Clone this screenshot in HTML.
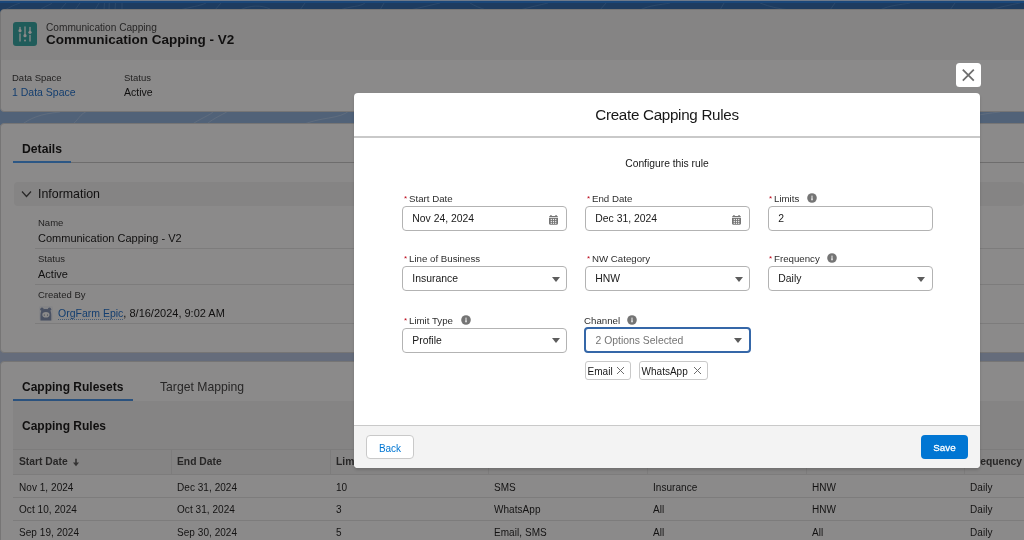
<!DOCTYPE html>
<html><head><meta charset="utf-8">
<style>
*{box-sizing:border-box;margin:0;padding:0}
html,body{width:1024px;height:540px;overflow:hidden}
body{font-family:"Liberation Sans",sans-serif;background:#b7c7e2;position:relative;color:#181818}
.a{position:absolute;white-space:nowrap}
#root{}
.card{position:absolute;background:#fff;border-radius:4px;border:1px solid #d8d8d8}
.lbl{font-size:9.5px;color:#3a3a3a}
.val{font-size:10.5px;color:#181818}
.link{color:#1f70cc}
.hr{position:absolute;height:1px;background:#e5e5e5}
.overlay{position:absolute;left:0;top:0;width:1024px;height:540px;background:rgba(8,7,7,0.47)}
.modal{position:absolute;left:354px;top:93px;width:626px;height:375px;background:#fff;border-radius:4px;overflow:hidden;box-shadow:0 2px 3px rgba(0,0,0,0.16)}
.mlbl{position:absolute;font-size:9.7px;color:#2e2e2e;white-space:nowrap;line-height:12px}
.req{position:absolute;left:-5px;top:0;color:#ba0517;font-size:8px}
.inp{position:absolute;height:24.5px;width:165px;border:1px solid #b3b3b3;border-radius:4px;font-size:10.4px;color:#181818;padding-left:9.3px;line-height:23px;white-space:nowrap}
.info{position:absolute;width:10px;height:10px;border-radius:50%;background:#747474}
.info:after{content:"";position:absolute;left:4.45px;top:2.4px;width:1.1px;height:4.8px;background:#fff;border-radius:0.5px}.info:before{content:"";position:absolute;left:4.05px;top:5.9px;width:1.9px;height:1.3px;background:#fff}
.caret{position:absolute;width:0;height:0;border-left:4px solid transparent;border-right:4px solid transparent;border-top:5px solid #5c5c5c}
.pill{position:absolute;height:19px;border:1px solid #c9c9c9;border-radius:3px;font-size:10px;line-height:19px;padding-left:1.6px;color:#181818;white-space:nowrap}
.th{position:absolute;font-size:10.3px;font-weight:bold;color:#444;white-space:nowrap}
.td{position:absolute;font-size:10px;letter-spacing:0.05px;color:#1e1e1e;white-space:nowrap}
</style></head><body><div id="root" style="position:absolute;left:0;top:0;width:1024px;height:540px;will-change:transform">
<!-- top blue band -->
<div class="a" style="left:0;top:0;width:1024px;height:1px;background:#c8e0ff"></div>
<div class="a" style="left:0;top:1px;width:1024px;height:2px;background:#2a80e0"></div>
<div class="a" style="left:0;top:3px;width:1024px;height:11px;background:#326db0"></div>
<svg class="a" style="left:0;top:3px" width="1024" height="7" viewBox="0 0 1024 7" fill="none" stroke="#6a9ad4" stroke-width="0.8" opacity="0.6">
<path d="M5 7C10 4 14 2 20 0M40 7C45 3 50 2 52 0M60 7L66 0M75 7L80 0M95 7L99 0M104 7L104.5 0M109 7L109.3 0M115 7L115.5 0M122 7L122 0M180 7C190 4 200 3 206 0M215 7L221 0M240 7C250 2 262 2 270 6M300 7L305 0M340 7C350 3 360 4 365 0M380 7L384 0M410 7C420 5 430 2 440 0M470 0C475 3 480 5 486 7M520 7C530 4 540 2 548 0M600 7L606 0M640 7C650 2 660 2 670 0M720 7L724 0M760 0C770 4 780 6 790 7M830 7L835 0M880 7C890 2 900 2 910 0M950 7L955 0M990 7C1000 4 1010 2 1020 0"/>
</svg>
<div class="a" style="left:0;top:14px;width:1024px;height:100px;background:linear-gradient(#4f86c8,#91b4de)"></div>
<div class="a" style="left:0;top:111px;width:1024px;height:14px;background:#91b4de"></div>
<svg class="a" style="left:0;top:110px" width="1024" height="16" viewBox="0 0 1024 16" fill="none" stroke="#c4d6ee" stroke-width="0.8" opacity="0.7">
<path d="M20 16C30 8 40 4 60 2M70 16C80 10 78 4 90 0M190 16C200 8 210 6 215 0M205 16C210 10 220 6 230 0M300 16C320 6 340 10 350 0M390 16C400 8 440 4 460 12C480 16 500 4 520 8M560 16C570 6 590 4 600 0M640 8C650 6 660 10 670 16M700 16C710 8 720 4 740 2M800 16C820 10 840 6 860 8C880 10 900 4 920 0M950 16C960 8 980 4 1000 2"/>
</svg>

<!-- header card -->
<div class="card" style="left:0;top:9px;width:1030px;height:103px;background:#fff"></div>
<div class="a" style="left:1px;top:10px;width:1030px;height:50px;background:#f3f3f3;border-radius:4px 0 0 0"></div>
<svg class="a" style="left:13px;top:22px" width="24" height="24" viewBox="0 0 24 24">
  <rect width="24" height="24" rx="3" fill="#36a8a4"/>
  <g stroke="#fff" stroke-width="1.3" stroke-linecap="round" fill="#fff">
    <line x1="7" y1="5.5" x2="7" y2="7.5"/><circle cx="7" cy="8.7" r="1.6" stroke="none"/><line x1="7" y1="12" x2="7" y2="19"/>
    <line x1="12" y1="5" x2="12" y2="12.5"/><circle cx="12" cy="13.7" r="1.6" stroke="none"/><circle cx="12" cy="18.5" r="0.9" stroke="none"/>
    <line x1="17" y1="5.5" x2="17" y2="9"/><circle cx="17" cy="10.3" r="1.6" stroke="none"/><line x1="17" y1="13.5" x2="17" y2="19"/>
  </g>
</svg>
<div class="a" style="left:46px;top:21.5px;font-size:10.15px;color:#444;line-height:12px">Communication Capping</div>
<div class="a" style="left:46px;top:32px;font-size:13.5px;font-weight:bold;color:#181818;line-height:16px">Communication Capping - V2</div>
<div class="a lbl" style="left:12px;top:73px;line-height:10px">Data Space</div>
<div class="a val link" style="left:12px;top:86px;line-height:12px">1 Data Space</div>
<div class="a lbl" style="left:124px;top:73px;line-height:10px">Status</div>
<div class="a val" style="left:124px;top:86px;line-height:12px">Active</div>

<!-- details card -->
<div class="card" style="left:0;top:123px;width:1030px;height:230px"></div>
<div class="a" style="left:22px;top:141.5px;font-size:12.2px;font-weight:bold;line-height:14px">Details</div>
<div class="hr" style="left:13px;top:162px;width:1011px;background:#c9c9c9"></div>
<div class="a" style="left:13px;top:161px;width:58px;height:2px;background:#4d9ff5"></div>
<div class="a" style="left:14px;top:182px;width:1010px;height:24px;background:#f3f3f3;border-radius:4px"></div>
<svg class="a" style="left:21px;top:190px" width="11" height="8" viewBox="0 0 11 8"><polyline points="1,1.5 5.5,6.5 10,1.5" fill="none" stroke="#444" stroke-width="1.2"/></svg>
<div class="a" style="left:38px;top:187px;font-size:12.4px;color:#181818;line-height:14px">Information</div>
<div class="a lbl" style="left:38px;top:218px;line-height:10px">Name</div>
<div class="a val" style="left:38px;top:232px;font-size:11px;line-height:13px">Communication Capping - V2</div>
<div class="hr" style="left:35px;top:248px;width:989px"></div>
<div class="a lbl" style="left:38px;top:254px;line-height:10px">Status</div>
<div class="a val" style="left:38px;top:268px;font-size:11px;line-height:13px">Active</div>
<div class="hr" style="left:35px;top:284px;width:989px"></div>
<div class="a lbl" style="left:38px;top:290px;line-height:10px">Created By</div>
<svg class="a" style="left:38px;top:305px" width="16" height="17" viewBox="0 0 16 17"><rect x="1" y="1" width="14" height="15" rx="2" fill="#f4f6fa"/><circle cx="4" cy="4.3" r="1.7" fill="#8494b4"/><circle cx="11.5" cy="4.3" r="1.7" fill="#8494b4"/><path d="M2.5 15.5C2.5 12 2.2 9 3 6.5C4 4.5 6 4 7.8 4C9.8 4 11.8 4.5 12.8 6.5C13.6 9 13.3 12 13.3 15.5Z" fill="#8494b4"/><ellipse cx="7.9" cy="9.8" rx="3.6" ry="2.8" fill="#fff"/><circle cx="6.3" cy="10" r="0.55" fill="#55607a"/><circle cx="9.5" cy="10" r="0.55" fill="#55607a"/></svg>
<div class="a val" style="left:58px;top:307px;font-size:10.5px;line-height:12px"><span class="link" style="border-bottom:1px dotted #7aa6d8">OrgFarm Epic</span><span style="font-size:11px">, 8/16/2024, 9:02 AM</span></div>
<div class="hr" style="left:35px;top:323px;width:989px"></div>

<!-- related card -->
<div class="card" style="left:0;top:361px;width:1030px;height:190px"></div>
<div class="a" style="left:22px;top:380px;font-size:12px;font-weight:bold;line-height:14px">Capping Rulesets</div>
<div class="a" style="left:160px;top:380px;font-size:12.2px;color:#444;line-height:14px">Target Mapping</div>
<div class="hr" style="left:13px;top:401px;width:1011px;background:#c9c9c9"></div>
<div class="a" style="left:13px;top:399px;width:120px;height:3px;background:#4a95e8"></div>
<div class="a" style="left:13px;top:401px;width:1011px;height:73px;background:#f3f3f3"></div>
<div class="a" style="left:22px;top:419px;font-size:12px;font-weight:bold;line-height:14px">Capping Rules</div>
<div class="hr" style="left:13px;top:449px;width:1011px"></div>
<div class="hr" style="left:13px;top:474px;width:1011px"></div>
<div class="a" style="left:13px;top:475px;width:1011px;height:70px;background:#fff"></div>
<div class="hr" style="left:13px;top:497px;width:1011px"></div>
<div class="hr" style="left:13px;top:520px;width:1011px"></div>
<div class="a" style="left:171px;top:450px;width:1px;height:24px;background:#e5e5e5"></div>
<div class="a" style="left:330px;top:450px;width:1px;height:24px;background:#e5e5e5"></div>
<div class="a" style="left:488px;top:450px;width:1px;height:24px;background:#e5e5e5"></div>
<div class="a" style="left:647px;top:450px;width:1px;height:24px;background:#e5e5e5"></div>
<div class="a" style="left:806px;top:450px;width:1px;height:24px;background:#e5e5e5"></div>
<div class="a" style="left:964px;top:450px;width:1px;height:24px;background:#e5e5e5"></div>
<div class="th" style="left:19px;top:455.5px">Start Date</div><svg class="a" style="left:72px;top:458px" width="8" height="9" viewBox="0 0 8 9"><path d="M4 0.8V6" stroke="#5c5c5c" stroke-width="1.6"/><path d="M1 4.6L7 4.6L4 8.3Z" fill="#5c5c5c"/></svg>
<div class="th" style="left:177px;top:455.5px">End Date</div>
<div class="th" style="left:336px;top:455.5px">Limits</div>
<div class="th" style="left:494px;top:455.5px">Channel</div>
<div class="th" style="left:653px;top:455.5px">Line of Business</div>
<div class="th" style="left:812px;top:455.5px">NW Category</div>
<div class="th" style="left:970px;top:455.5px">Frequency</div>

<div class="td" style="left:19px;top:481.5px">Nov 1, 2024</div>
<div class="td" style="left:177px;top:481.5px">Dec 31, 2024</div>
<div class="td" style="left:336px;top:481.5px">10</div>
<div class="td" style="left:494px;top:481.5px">SMS</div>
<div class="td" style="left:653px;top:481.5px">Insurance</div>
<div class="td" style="left:812px;top:481.5px">HNW</div>
<div class="td" style="left:970px;top:481.5px">Daily</div>

<div class="td" style="left:19px;top:503.5px">Oct 10, 2024</div>
<div class="td" style="left:177px;top:503.5px">Oct 31, 2024</div>
<div class="td" style="left:336px;top:503.5px">3</div>
<div class="td" style="left:494px;top:503.5px">WhatsApp</div>
<div class="td" style="left:653px;top:503.5px">All</div>
<div class="td" style="left:812px;top:503.5px">HNW</div>
<div class="td" style="left:970px;top:503.5px">Daily</div>

<div class="td" style="left:19px;top:526.5px">Sep 19, 2024</div>
<div class="td" style="left:177px;top:526.5px">Sep 30, 2024</div>
<div class="td" style="left:336px;top:526.5px">5</div>
<div class="td" style="left:494px;top:526.5px">Email, SMS</div>
<div class="td" style="left:653px;top:526.5px">All</div>
<div class="td" style="left:812px;top:526.5px">All</div>
<div class="td" style="left:970px;top:526.5px">Daily</div>

<div class="overlay"></div>

<!-- close button -->
<div class="a" style="left:956px;top:62.8px;width:24.7px;height:24.5px;background:#fff;border-radius:3.5px"></div>
<svg class="a" style="left:956px;top:63px" width="24" height="24" viewBox="0 0 24 24"><path d="M6.8 6.6L17.8 17.6M17.8 6.6L6.8 17.6" stroke="#6e6e6e" stroke-width="1.8"/></svg>

<!-- modal -->
<div class="modal">
  <div class="a" style="left:0;top:13px;width:626px;font-size:15.2px;letter-spacing:-0.3px;text-align:center;line-height:18px;color:#181818">Create Capping Rules</div>
  <div class="a" style="left:0;top:43px;width:626px;height:1.5px;background:#c9c9c9"></div>
  <div class="a" style="left:0;top:65px;width:626px;text-align:center;font-size:10.3px;color:#181818;line-height:12px">Configure this rule</div>

  <!-- row 1 -->
  <div class="mlbl" style="left:55px;top:100px"><span class="req">*</span>Start Date</div>
  <div class="inp" style="left:48px;top:113px">Nov 24, 2024</div>
  <svg class="a" style="left:195px;top:122px" width="10" height="10" viewBox="0 0 10 10"><rect x="1.3" y="0" width="1.3" height="1.5" fill="#747474"/><rect x="6.4" y="0" width="1.3" height="1.5" fill="#747474"/><path d="M0 2.1Q0 0.9 1.2 0.9H7.8Q9 0.9 9 2.1V2.1H0Z" fill="#747474"/><path d="M0 2.7H9V8.6Q9 9.7 7.9 9.7H1.1Q0 9.7 0 8.6Z" fill="#747474"/><g fill="#fff" opacity="0.9"><rect x="1.7" y="3.9" width="1.2" height="1.2"/><rect x="3.9" y="3.9" width="1.2" height="1.2"/><rect x="6.1" y="3.9" width="1.2" height="1.2"/><rect x="1.7" y="5.9" width="1.2" height="1.2"/><rect x="3.9" y="5.9" width="1.2" height="1.2"/><rect x="6.1" y="5.9" width="1.2" height="1.2"/><rect x="1.7" y="7.8" width="1.2" height="1.1"/><rect x="3.9" y="7.8" width="1.2" height="1.1"/><rect x="6.1" y="7.8" width="1.2" height="1.1"/></g></svg>

  <div class="mlbl" style="left:238px;top:100px"><span class="req">*</span>End Date</div>
  <div class="inp" style="left:231px;top:113px">Dec 31, 2024</div>
  <svg class="a" style="left:378px;top:122px" width="10" height="10" viewBox="0 0 10 10"><rect x="1.3" y="0" width="1.3" height="1.5" fill="#747474"/><rect x="6.4" y="0" width="1.3" height="1.5" fill="#747474"/><path d="M0 2.1Q0 0.9 1.2 0.9H7.8Q9 0.9 9 2.1V2.1H0Z" fill="#747474"/><path d="M0 2.7H9V8.6Q9 9.7 7.9 9.7H1.1Q0 9.7 0 8.6Z" fill="#747474"/><g fill="#fff" opacity="0.9"><rect x="1.7" y="3.9" width="1.2" height="1.2"/><rect x="3.9" y="3.9" width="1.2" height="1.2"/><rect x="6.1" y="3.9" width="1.2" height="1.2"/><rect x="1.7" y="5.9" width="1.2" height="1.2"/><rect x="3.9" y="5.9" width="1.2" height="1.2"/><rect x="6.1" y="5.9" width="1.2" height="1.2"/><rect x="1.7" y="7.8" width="1.2" height="1.1"/><rect x="3.9" y="7.8" width="1.2" height="1.1"/><rect x="6.1" y="7.8" width="1.2" height="1.1"/></g></svg>

  <div class="mlbl" style="left:420px;top:100px"><span class="req">*</span>Limits</div>
  <svg class="a" style="left:453px;top:100px" width="10" height="10" viewBox="0 0 10 10"><circle cx="5" cy="5" r="4.8" fill="#747474"/><path d="M5 2.6V6.4" stroke="#fff" stroke-width="0.9"/><path d="M4.2 7.3H5.8L5.4 5.6H4.6Z" fill="#fff"/></svg>
  <div class="inp" style="left:414px;top:113px">2</div>

  <!-- row 2 -->
  <div class="mlbl" style="left:55px;top:160px"><span class="req">*</span>Line of Business</div>
  <div class="inp" style="left:48px;top:173px">Insurance</div>
  <div class="caret" style="left:198px;top:184px"></div>

  <div class="mlbl" style="left:238px;top:160px"><span class="req">*</span>NW Category</div>
  <div class="inp" style="left:231px;top:173px">HNW</div>
  <div class="caret" style="left:381px;top:184px"></div>

  <div class="mlbl" style="left:420px;top:160px"><span class="req">*</span>Frequency</div>
  <svg class="a" style="left:473px;top:160px" width="10" height="10" viewBox="0 0 10 10"><circle cx="5" cy="5" r="4.8" fill="#747474"/><path d="M5 2.6V6.4" stroke="#fff" stroke-width="0.9"/><path d="M4.2 7.3H5.8L5.4 5.6H4.6Z" fill="#fff"/></svg>
  <div class="inp" style="left:414px;top:173px">Daily</div>
  <div class="caret" style="left:563px;top:184px"></div>

  <!-- row 3 -->
  <div class="mlbl" style="left:55px;top:222px"><span class="req">*</span>Limit Type</div>
  <svg class="a" style="left:107px;top:222px" width="10" height="10" viewBox="0 0 10 10"><circle cx="5" cy="5" r="4.8" fill="#747474"/><path d="M5 2.6V6.4" stroke="#fff" stroke-width="0.9"/><path d="M4.2 7.3H5.8L5.4 5.6H4.6Z" fill="#fff"/></svg>
  <div class="inp" style="left:48px;top:235px">Profile</div>
  <div class="caret" style="left:198px;top:245px"></div>

  <div class="mlbl" style="left:230px;top:222px">Channel</div>
  <svg class="a" style="left:273px;top:222px" width="10" height="10" viewBox="0 0 10 10"><circle cx="5" cy="5" r="4.8" fill="#747474"/><path d="M5 2.6V6.4" stroke="#fff" stroke-width="0.9"/><path d="M4.2 7.3H5.8L5.4 5.6H4.6Z" fill="#fff"/></svg>
  <div class="inp" style="left:230px;top:234px;width:167px;height:26px;border:2px solid #3567a8;color:#747474;padding-left:9.5px">2 Options Selected</div>
  <div class="caret" style="left:380px;top:245px"></div>

  <div class="pill" style="left:231px;top:268px;width:46px">Email
    <svg class="a" style="left:30px;top:4px" width="9" height="9" viewBox="0 0 9 9"><path d="M1 1L8 8M8 1L1 8" stroke="#666" stroke-width="0.95"/></svg></div>
  <div class="pill" style="left:285px;top:268px;width:69px">WhatsApp
    <svg class="a" style="left:53px;top:4px" width="9" height="9" viewBox="0 0 9 9"><path d="M1 1L8 8M8 1L1 8" stroke="#666" stroke-width="0.95"/></svg></div>

  <!-- footer -->
  <div class="a" style="left:0;top:332px;width:626px;height:43px;background:#f3f3f3;border-top:1.5px solid #c9c9c9"></div>
  <div class="a" style="left:12px;top:342px;width:48px;height:24px;background:#fff;border:1px solid #c9c9c9;border-radius:4px;font-size:10px;color:#0176d3;text-align:center;line-height:25px">Back</div>
  <div class="a" style="left:567px;top:342px;width:47px;height:24px;background:#0176d3;border-radius:4px;font-size:9.8px;font-weight:normal;-webkit-text-stroke:0.3px #fff;color:#fff;text-align:center;line-height:26px">Save</div>
</div>
</div></body></html>
